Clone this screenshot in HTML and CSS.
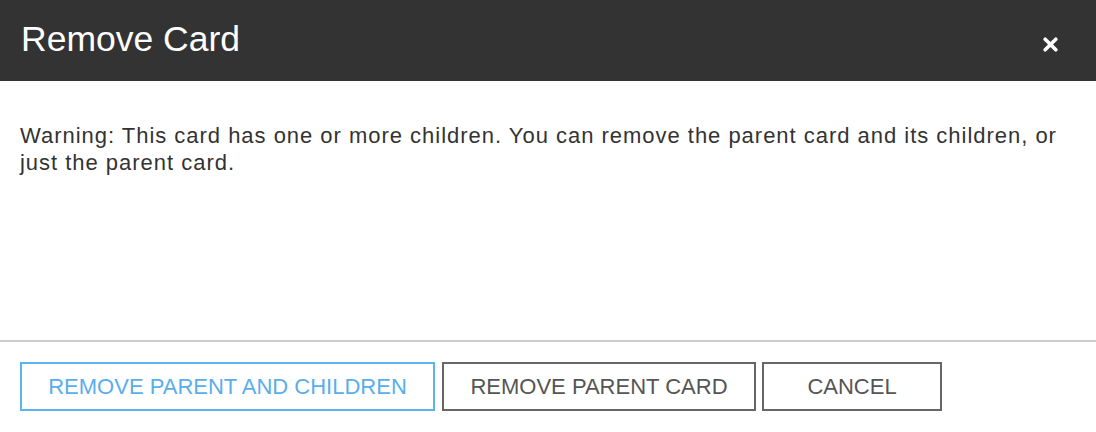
FILE: index.html
```html
<!DOCTYPE html>
<html>
<head>
<meta charset="utf-8">
<link rel="stylesheet" href="styles.css">
</head>
<body>
<div class="dialog">
  <div class="header">
    <h1 class="title">Remove Card</h1>
    <button class="close" aria-label="Close">
      <svg width="15" height="15" viewBox="0 0 15 15"><path d="M2.2 2.2 L12.8 12.8 M12.8 2.2 L2.2 12.8" stroke="#fff" stroke-width="3.6" stroke-linecap="round"/></svg>
    </button>
  </div>
  <div class="body">
    <p class="message">Warning: This card has one or more children. You can remove the parent card and its children, or just the parent card.</p>
  </div>
  <div class="footer">
    <button class="btn btn-primary">REMOVE PARENT AND CHILDREN</button>
    <button class="btn btn-parent">REMOVE PARENT CARD</button>
    <button class="btn btn-cancel">CANCEL</button>
  </div>
</div>
</body>
</html>
```

FILE: styles.css
```css
html, body {
  margin: 0;
  padding: 0;
  background: #fff;
}
body {
  font-family: "Liberation Sans", Arial, sans-serif;
  width: 1096px;
  height: 432px;
  overflow: hidden;
}
.dialog {
  display: flex;
  flex-direction: column;
  height: 432px;
}
.header {
  height: 81px;
  background: #333333;
  display: flex;
  align-items: center;
  justify-content: space-between;
  padding: 0 38px 0 21px;
  box-sizing: border-box;
}
.title {
  margin: 0;
  font-weight: normal;
  font-size: 35.5px;
  color: #fff;
  line-height: 1;
  padding-bottom: 1px;
}
.close {
  background: none;
  border: 0;
  padding: 0;
  width: 15px;
  height: 15px;
  display: flex;
  margin-top: 8px;
}
.body {
  height: 261px;
  padding: 41px 20px 0 20px;
  box-sizing: border-box;
  border-bottom: 2px solid #cccccc;
}
.message {
  margin: 0;
  font-size: 22px;
  line-height: 27px;
  color: #333333;
  letter-spacing: 0.98px;
}
.footer {
  display: flex;
  gap: 7px;
  padding: 20px 20px 0 20px;
}
.btn {
  font-family: "Liberation Sans", Arial, sans-serif;
  font-size: 22px;
  height: 49px;
  background: #fff;
  border: 2px solid #666666;
  color: #555555;
  padding: 0;
  box-sizing: border-box;
  line-height: 1;
  text-align: center;
}
.btn-primary {
  width: 415px;
  border-color: #5ab4ee;
  color: #5aaeea;
}
.btn-parent {
  width: 314px;
}
.btn-cancel {
  width: 180px;
  margin-left: -1px;
}
```
